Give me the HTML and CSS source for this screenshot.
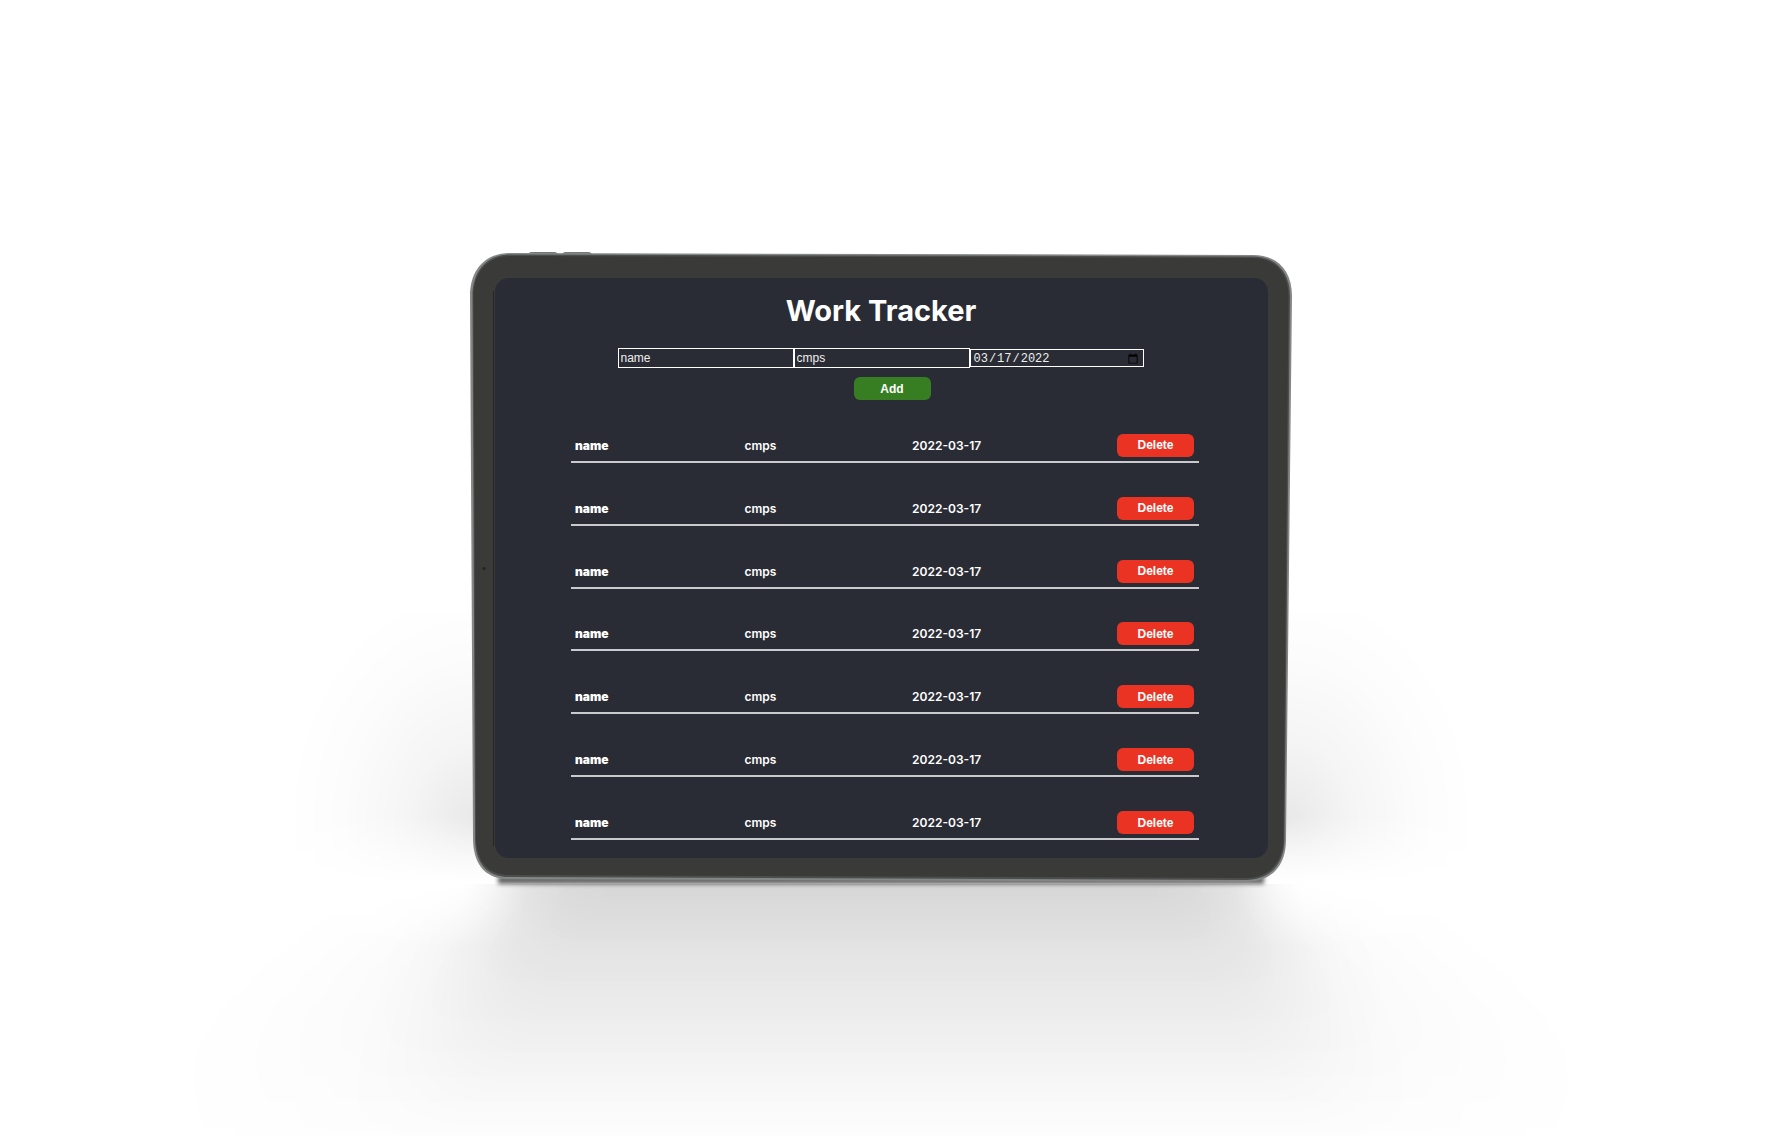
FILE: index.html
```html
<!DOCTYPE html>
<html lang="en">
<head>
<meta charset="utf-8">
<meta name="viewport" content="width=device-width, initial-scale=1">
<title>Work Tracker</title>
<link rel="stylesheet" href="styles.css">
</head>
<body>
<div class="stage">
  <div class="tablet">
    <div class="shadow shadow-wall"></div>
    <svg class="shadow shadow-floor" viewBox="0 0 1622 255" preserveAspectRatio="none" aria-hidden="true">
      <defs>
        <linearGradient id="fade" gradientUnits="userSpaceOnUse" x1="0" y1="0" x2="0" y2="255">
          <stop offset="0" stop-opacity=".13"/>
          <stop offset=".33" stop-opacity=".07"/>
          <stop offset=".6" stop-opacity=".04"/>
          <stop offset=".84" stop-opacity=".015"/>
          <stop offset="1" stop-opacity="0"/>
        </linearGradient>
        <linearGradient id="fade-wide" gradientUnits="userSpaceOnUse" x1="0" y1="0" x2="0" y2="255">
          <stop offset="0" stop-opacity=".035"/>
          <stop offset=".6" stop-opacity=".02"/>
          <stop offset="1" stop-opacity=".004"/>
        </linearGradient>
        <filter id="soft" filterUnits="userSpaceOnUse" x="-100" y="-200" width="1822" height="600">
          <feGaussianBlur stdDeviation="45 18"/>
        </filter>
        <filter id="softer" filterUnits="userSpaceOnUse" x="-300" y="-200" width="2222" height="700">
          <feGaussianBlur stdDeviation="75 22"/>
        </filter>
      </defs>
      <path d="M420 -100 H1202 V0 C1290 60 1440 140 1460 300 H162 C182 140 332 60 420 0 Z" fill="url(#fade-wide)" filter="url(#softer)"/>
      <path d="M440 -100 H1182 V0 L1300 250 V300 H320 V250 L440 0 Z" fill="url(#fade)" filter="url(#soft)"/>
    </svg>
    <div class="shadow shadow-contact"></div>
    <svg class="frame" viewBox="0 0 822 630" preserveAspectRatio="none" aria-hidden="true">
      <path d="M58 2 Q58 -1 62 -1 H84 Q88 -1 88 2 Z M92 2 Q92 -1 96 -1 H118 Q122 -1 122 2 Z" fill="#777"/>
      <path d="M40 0 L783 2 C808 2 822 18 822 43 L816 586 C816 611 802 628 776 628 L39 625 C14 625 3 609 3 584 L0 43 C0 18 14 0 40 0 Z" fill="#858787"/>
      <path d="M40 1.500 L783 3.500 C806 3.500 820 19 820 43 L814.500 585 C814.500 609 801 626 776 626 L39 623 C16 623 5 608 5 584 L2.500 43 C2.500 19 16 1.500 40 1.500 Z" fill="#4c4d4d"/>
      <path d="M40 3 L783 5 C805 5 818.500 20 818.500 43 L813.500 584 C813.500 607 800 624 776 624 L39 621 C17 621 6 606 6 583 L3.500 43 C3.500 20 17 3 40 3 Z" fill="#3a3a39"/>
      <circle cx="14" cy="315" r="1.500" fill="#222"/>
      <path d="M24 38 V592" stroke="#111" stroke-width="1"/>
      <path d="M25 38 V592 M797.500 38 V592" stroke="#4c4c52" stroke-width="1"/>
    </svg>
    <main class="screen">
      <h1 class="title">Work Tracker</h1>
      <form class="entry">
        <div class="fields">
          <input class="field" type="text" value="name" aria-label="Name">
          <input class="field" type="text" value="cmps" aria-label="Company">
          <input class="field field-date" type="date" value="2022-03-17" aria-label="Date">
        </div>
        <button class="button button-add" type="button">Add</button>
      </form>
      <ul class="jobs">
        <li class="job"><span class="job-name">name</span><span>cmps</span><span>2022-03-17</span><button class="button button-delete" type="button">Delete</button></li>
        <li class="job"><span class="job-name">name</span><span>cmps</span><span>2022-03-17</span><button class="button button-delete" type="button">Delete</button></li>
        <li class="job"><span class="job-name">name</span><span>cmps</span><span>2022-03-17</span><button class="button button-delete" type="button">Delete</button></li>
        <li class="job"><span class="job-name">name</span><span>cmps</span><span>2022-03-17</span><button class="button button-delete" type="button">Delete</button></li>
        <li class="job"><span class="job-name">name</span><span>cmps</span><span>2022-03-17</span><button class="button button-delete" type="button">Delete</button></li>
        <li class="job"><span class="job-name">name</span><span>cmps</span><span>2022-03-17</span><button class="button button-delete" type="button">Delete</button></li>
        <li class="job"><span class="job-name">name</span><span>cmps</span><span>2022-03-17</span><button class="button button-delete" type="button">Delete</button></li>
      </ul>
    </main>
  </div>
</div>
</body>
</html>
```
FILE: styles.css
```css
* { box-sizing: border-box; }

body {
  margin: 0;
  background: #fff;
  color: #fff;
  font-family: Inter, "Liberation Sans", sans-serif;
}

.stage {
  min-height: 100vh;
  padding: 253px 4px 253px 0;
  display: flex;
  justify-content: center;
  align-items: flex-start;
  overflow: hidden;
}

.tablet {
  position: relative;
  width: 100%;
  max-width: 822px;
  padding: 25px 24px 26px 25px;
}

/* Soft light falling behind and below the device */
.shadow { position: absolute; }

.shadow-wall {
  inset: 360px -200px 0;
  background:
    radial-gradient(ellipse 190px 240px at 205px 210px, rgba(0, 0, 0, .09), rgba(0, 0, 0, .04) 35%, rgba(0, 0, 0, .01) 70%, transparent),
    radial-gradient(ellipse 190px 240px at calc(100% - 205px) 210px, rgba(0, 0, 0, .09), rgba(0, 0, 0, .04) 35%, rgba(0, 0, 0, .01) 70%, transparent);
  mask-image: linear-gradient(#000 75%, transparent);
}

.shadow-floor {
  top: 100%;
  left: -400px;
  width: calc(100% + 800px);
  height: 255px;
  overflow: hidden;
  mask-image: linear-gradient(90deg, transparent 24%, #000 28%, #000 72%, transparent 76%), linear-gradient(transparent, #000 25%);
}

.shadow-contact {
  inset: auto 28px 0;
  height: 8px;
  background: rgba(0, 0, 0, .6);
  filter: blur(2px);
}

.frame {
  position: absolute;
  inset: 0;
  width: 100%;
  height: 100%;
  overflow: visible;
}

.screen {
  position: relative;
  min-height: 580px;
  padding: 15px 69px 18px 76px;
  border-radius: 14px;
  background: #2a2c35;
  display: flex;
  flex-direction: column;
}

.title {
  margin: 0;
  padding-right: 8px;
  font-size: 29px;
  line-height: 36px;
  font-weight: 700;
  text-align: center;
}

.entry {
  padding: 19px 9px 0 0;
  display: flex;
  flex-direction: column;
  align-items: center;
  gap: 9px;
}

.fields {
  display: flex;
  align-items: center;
}

.field {
  width: 176px;
  height: 20px;
  padding: 0 2px;
  border: 1px solid #fff;
  border-radius: 0;
  background: transparent;
  color: #eee;
  font: 12px "Liberation Sans", sans-serif;
}

.field-date {
  width: 174px;
  height: 18px;
  padding: 1px 2px 0;
  font: 12px "Liberation Mono", monospace;
}

.button {
  width: 77px;
  height: 23px;
  padding: 0;
  border: 0;
  border-radius: 6px;
  color: #fff;
  font: 700 12px "Liberation Sans", sans-serif;
}

.button-add {
  margin-left: 23px;
  background: #377e22;
}

.button-delete { background: #ea3323; }

.jobs {
  flex: 1;
  margin: 0;
  padding: 0;
  list-style: none;
  display: grid;
  grid-auto-rows: 1fr;
}

.job {
  padding: 0 5px 4px 4px;
  border-bottom: 2px solid #c8cacd;
  display: flex;
  justify-content: space-between;
  align-items: flex-end;
  font-size: 12px;
  line-height: 23px;
  font-weight: 600;
}

.job-name { font-weight: 900; }
```
